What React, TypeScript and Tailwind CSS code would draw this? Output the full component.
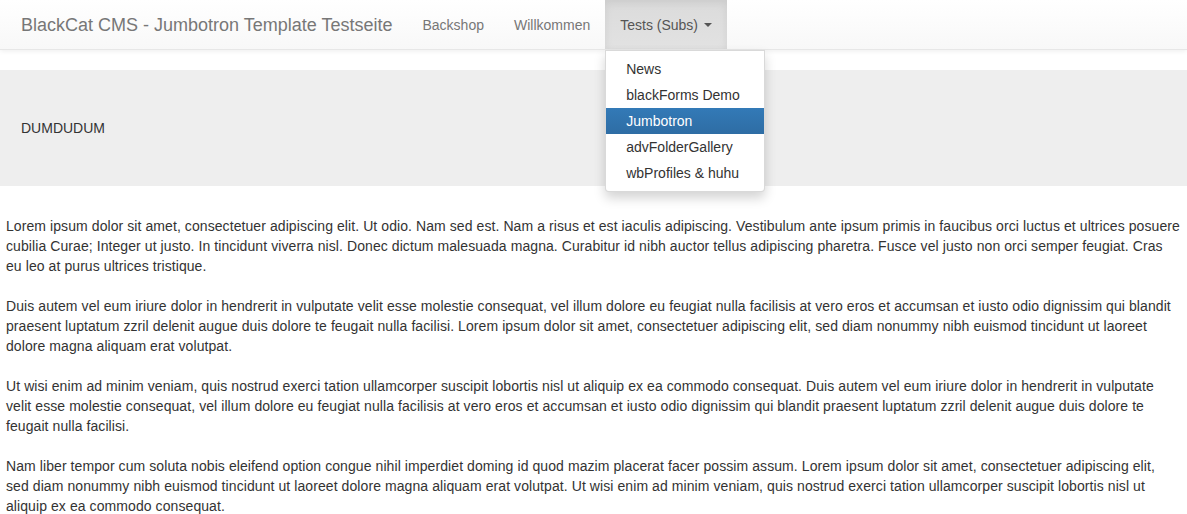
import React from "react";

const paras = [
  "Lorem ipsum dolor sit amet, consectetuer adipiscing elit. Ut odio. Nam sed est. Nam a risus et est iaculis adipiscing. Vestibulum ante ipsum primis in faucibus orci luctus et ultrices posuere cubilia Curae; Integer ut justo. In tincidunt viverra nisl. Donec dictum malesuada magna. Curabitur id nibh auctor tellus adipiscing pharetra. Fusce vel justo non orci semper feugiat. Cras eu leo at purus ultrices tristique.",
  "Duis autem vel eum iriure dolor in hendrerit in vulputate velit esse molestie consequat, vel illum dolore eu feugiat nulla facilisis at vero eros et accumsan et iusto odio dignissim qui blandit praesent luptatum zzril delenit augue duis dolore te feugait nulla facilisi. Lorem ipsum dolor sit amet, consectetuer adipiscing elit, sed diam nonummy nibh euismod tincidunt ut laoreet dolore magna aliquam erat volutpat.",
  "Ut wisi enim ad minim veniam, quis nostrud exerci tation ullamcorper suscipit lobortis nisl ut aliquip ex ea commodo consequat. Duis autem vel eum iriure dolor in hendrerit in vulputate velit esse molestie consequat, vel illum dolore eu feugiat nulla facilisis at vero eros et accumsan et iusto odio dignissim qui blandit praesent luptatum zzril delenit augue duis dolore te feugait nulla facilisi.",
  "Nam liber tempor cum soluta nobis eleifend option congue nihil imperdiet doming id quod mazim placerat facer possim assum. Lorem ipsum dolor sit amet, consectetuer adipiscing elit, sed diam nonummy nibh euismod tincidunt ut laoreet dolore magna aliquam erat volutpat. Ut wisi enim ad minim veniam, quis nostrud exerci tation ullamcorper suscipit lobortis nisl ut aliquip ex ea commodo consequat.",
];

const items = ["News", "blackForms Demo", "Jumbotron", "advFolderGallery", "wbProfiles & huhu"];

export default function App() {
  return (
    <div className="min-h-[514px] bg-white text-[14px] leading-[20px] text-[#333]" style={{ fontFamily: '"Liberation Sans", Arial, Helvetica, sans-serif' }}>
      <nav className="relative z-10 flex h-[50px] items-stretch border-b border-[#e7e7e7] bg-gradient-to-b from-white to-[#f8f8f8] shadow-[inset_0_1px_0_rgba(255,255,255,0.15),0_1px_5px_rgba(0,0,0,0.075)]">
        <a className="flex items-center pl-[21px] pr-[15px] text-[18px] text-[#777]">BlackCat CMS - Jumbotron Template Testseite</a>
        <ul className="flex items-stretch">
          <li className="flex items-center px-[15px] text-[#777]">Backshop</li>
          <li className="flex items-center px-[15px] text-[#777]">Willkommen</li>
          <li className="relative flex items-center bg-gradient-to-b from-[#dbdbdb] to-[#e2e2e2] px-[15px] text-[#555] shadow-[inset_0_3px_9px_rgba(0,0,0,0.075)]">
            Tests (Subs)
            <span className="ml-[6px] inline-block h-0 w-0 border-x-[4px] border-t-[4px] border-x-transparent border-t-[#555]" />
            <ul className="absolute left-0 top-[50px] w-[160px] rounded-b-[4px] border border-[rgba(0,0,0,0.15)] bg-white py-[5px] text-[#333] shadow-[0_6px_12px_rgba(0,0,0,0.175)]">
              {items.map((it) => (
                <li
                  key={it}
                  className={
                    it === "Jumbotron"
                      ? "whitespace-nowrap bg-gradient-to-b from-[#337ab7] to-[#2e6da4] px-[20px] py-[3px] text-white"
                      : "whitespace-nowrap px-[20px] py-[3px]"
                  }
                >
                  {it}
                </li>
              ))}
            </ul>
          </li>
        </ul>
      </nav>
      <div className="mt-[20px] bg-[#eeeeee] px-[21px] py-[48px]">
        <p>DUMDUDUM</p>
      </div>
      <div className="px-[6px] pt-[30px] tracking-[0.08px]">
        {paras.map((p, i) => (
          <p key={i} className="mb-[20px]">
            {p}
          </p>
        ))}
      </div>
    </div>
  );
}
